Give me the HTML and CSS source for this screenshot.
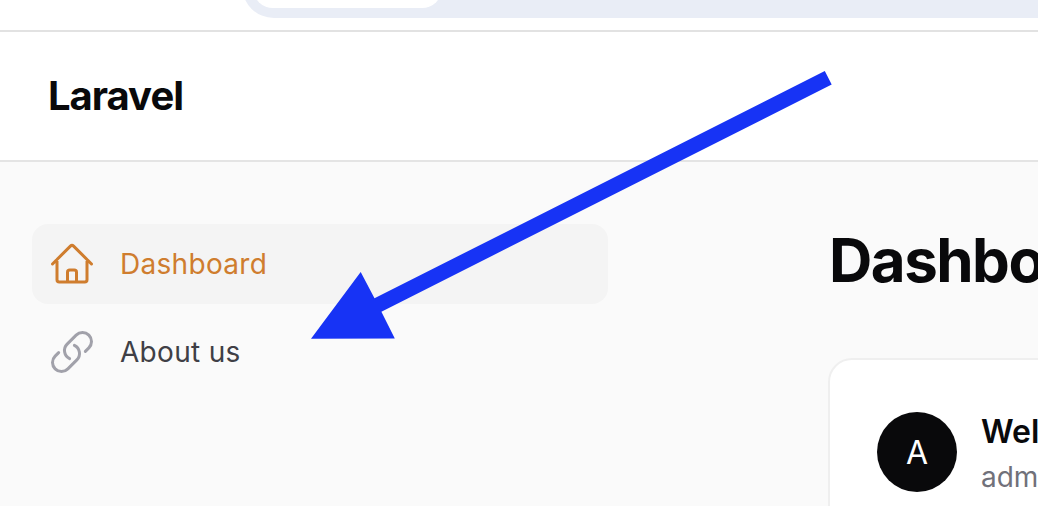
FILE: index.html
```html
<!DOCTYPE html>
<html lang="en">
<head>
  <meta charset="UTF-8" />
  <meta name="viewport" content="width=device-width, initial-scale=1.0" />
  <title>Dashboard - Laravel</title>
  <link rel="stylesheet" href="styles.css">
</head>
<body>
  <div class="browser-strip">
    <div class="address-bar">
      <div class="address-tab"></div>
    </div>
  </div>

  <header class="topbar">
    <div class="brand">Laravel</div>
  </header>

  <div class="layout">
    <nav class="sidebar">
      <a class="nav-item active" href="#">
        <svg class="nav-icon" viewBox="0 0 24 24" fill="none" stroke="currentColor" stroke-width="1.5" stroke-linecap="round" stroke-linejoin="round">
          <path d="m2.25 12 8.955-8.955c.44-.439 1.152-.439 1.591 0L21.75 12M4.5 9.75v10.125c0 .621.504 1.125 1.125 1.125H9.75v-4.875c0-.621.504-1.125 1.125-1.125h2.25c.621 0 1.125.504 1.125 1.125V21h4.125c.621 0 1.125-.504 1.125-1.125V9.75M8.25 21h8.25" />
        </svg>
        <span>Dashboard</span>
      </a>
      <a class="nav-item" href="#">
        <svg class="nav-icon" viewBox="0 0 24 24" fill="none" stroke="currentColor" stroke-width="1.5" stroke-linecap="round" stroke-linejoin="round">
          <path d="M13.19 8.688a4.5 4.5 0 0 1 1.242 7.244l-4.5 4.5a4.5 4.5 0 0 1-6.364-6.364l1.757-1.757m13.35-.622 1.757-1.757a4.5 4.5 0 0 0-6.364-6.364l-4.5 4.5a4.5 4.5 0 0 0 1.242 7.244" />
        </svg>
        <span>About us</span>
      </a>
    </nav>

    <main class="content">
      <h1 class="page-title">Dashboard</h1>
      <section class="card">
        <div class="avatar">A</div>
        <div class="user-info">
          <div class="user-welcome">Welcome</div>
          <div class="user-email">admin@admin.com</div>
        </div>
      </section>
    </main>
  </div>

  <!-- annotation arrow drawn on top of the screenshot -->
  <svg class="annotation" viewBox="0 0 1038 506">
    <polygon points="824.8,71 831.7,84.5 381.4,311.7 394.8,338.4 311,338.8 360.7,272 374.5,298.3" />
  </svg>
</body>
</html>
```

FILE: styles.css
```css
* {
  box-sizing: border-box;
}

body {
  margin: 0;
  width: 1038px;
  height: 506px;
  overflow: hidden;
  background-color: #fafafa;
  color: #09090b;
  font-family: Inter, "Liberation Sans", sans-serif;
}

.browser-strip {
  height: 32px;
  background-color: #fff;
  border-bottom: 2px solid #e2e2e2;
  padding-left: 242px;
  overflow: hidden;
}

/* bar and tab start above the window, only their bottom curves show */
.address-bar {
  height: 32px;
  margin-top: -14px;
  background-color: #e9edf6;
  border-bottom-left-radius: 32px;
  padding-left: 11px;
}

.address-tab {
  width: 189px;
  height: 22px;
  background-color: #fff;
  border-bottom-left-radius: 20px;
  border-bottom-right-radius: 20px;
}

.topbar {
  height: 130px;
  background-color: #fff;
  border-bottom: 2px solid #e4e4e4;
  padding-left: 48px;
  display: flex;
  align-items: center;
}

.brand {
  font-size: 40px;
  font-weight: 700;
  letter-spacing: -1px;
  line-height: 40px;
}

.layout {
  display: flex;
  height: 344px;
  overflow: hidden;
}

.sidebar {
  flex: none;
  width: 640px;
  padding: 62px 32px 0;
  display: flex;
  flex-direction: column;
  gap: 8px;
}

.nav-item {
  display: flex;
  align-items: center;
  gap: 24px;
  height: 80px;
  padding: 0 16px;
  border-radius: 16px;
  font-size: 28px;
  font-weight: 400;
  letter-spacing: 0.3px;
  color: #3f3f46;
  text-decoration: none;
}

.nav-item.active {
  background-color: #f4f4f4;
  color: #cf7d2e;
}

.nav-icon {
  width: 48px;
  height: 48px;
  flex: none;
  color: #a1a1aa;
}

.active .nav-icon {
  color: #cf7d2e;
}

.content {
  flex: none;
  width: 398px;
  padding: 62px 0 0 188px;
  overflow: hidden;
}

.page-title {
  margin: 0 0 62px 1px;
  font-size: 60px;
  line-height: 72px;
  font-weight: 700;
  letter-spacing: -1.5px;
  white-space: nowrap;
}

.card {
  width: 900px;
  height: 200px;
  background-color: #fff;
  border: 2px solid #efefef;
  border-radius: 24px;
  padding: 52px 47px;
  display: flex;
  gap: 24px;
}

.avatar {
  flex: none;
  width: 80px;
  height: 80px;
  border-radius: 50%;
  background-color: #09090b;
  color: #fff;
  font-size: 32px;
  display: flex;
  align-items: center;
  justify-content: center;
}

.user-welcome {
  font-size: 32px;
  line-height: 40px;
  font-weight: 600;
}

.user-email {
  margin-top: 5px;
  font-size: 28px;
  line-height: 40px;
  color: #71717a;
}

.annotation {
  position: absolute;
  top: 0;
  left: 0;
  width: 1038px;
  height: 506px;
  pointer-events: none;
}

.annotation polygon {
  fill: #1733f5;
}
```
